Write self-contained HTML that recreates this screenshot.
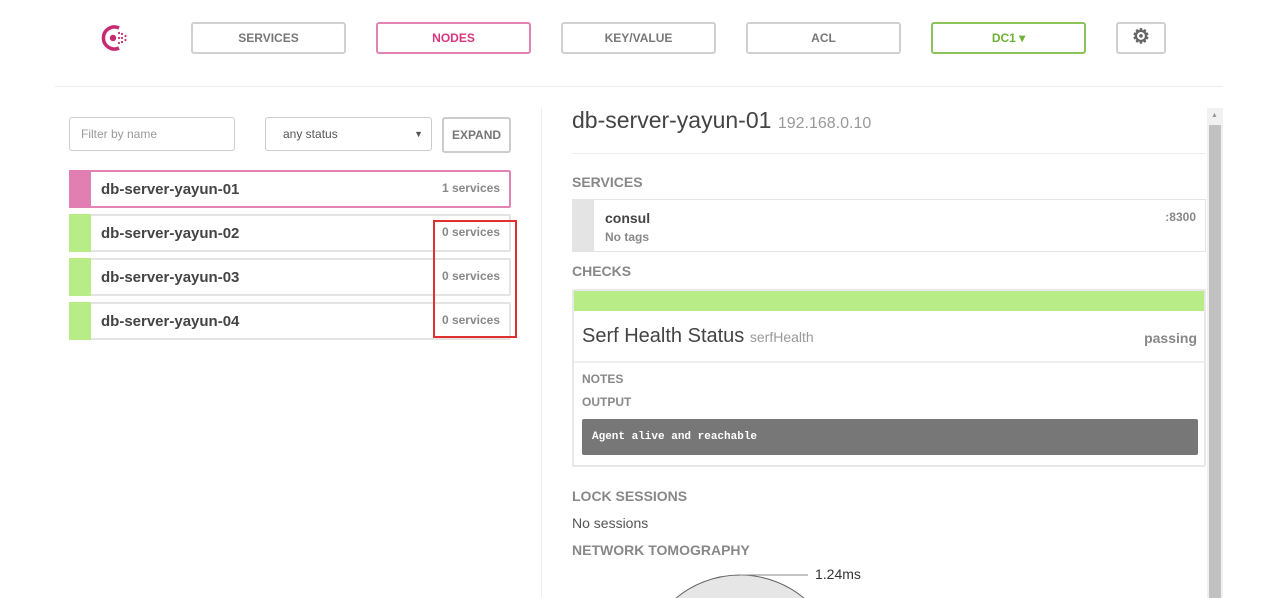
<!DOCTYPE html>
<html><head><style>
body{margin:0;width:1267px;height:598px;overflow:hidden;background:#fff;font-family:"Liberation Sans",sans-serif;position:relative}
.a{position:absolute}
.nb{position:absolute;top:22px;height:32px;width:155px;border:2px solid #d0d0d0;border-radius:3px;box-sizing:border-box;text-align:center;line-height:28px;font-size:12px;font-weight:bold;color:#777}
.row{position:absolute;left:69px;width:442px;height:38px;border:2px solid #e4e4e4;box-sizing:border-box;border-radius:2px}
.row .bar{position:absolute;left:-2px;top:-2px;bottom:-2px;width:22px;background:#b8ec86}
.row .n{position:absolute;left:30px;top:9px;font-size:15px;font-weight:bold;color:#444}
.row .s{position:absolute;right:9px;top:9px;font-size:12px;font-weight:bold;color:#888}
.h{position:absolute;left:572px;font-size:14px;font-weight:bold;color:#888}
</style></head><body>
<svg class="a" style="left:99px;top:23px" width="32" height="30" viewBox="0 0 32 30"><path d="M20 5A11 11 0 1 0 20 25" fill="none" stroke="#c62a71" stroke-width="3.5"/><circle cx="14" cy="15" r="3.2" fill="#c62a71"/><g fill="#c62a71"><circle cx="20" cy="15" r="1.1"/><circle cx="23" cy="11" r="1.1"/><circle cx="23" cy="15" r="1.1"/><circle cx="23" cy="19" r="1.1"/><circle cx="26.5" cy="13" r="1.1"/><circle cx="26.5" cy="17" r="1.1"/><circle cx="20" cy="10" r="1.1"/><circle cx="20" cy="20" r="1.1"/></g></svg>
<div class="nb" style="left:191px">SERVICES</div>
<div class="nb" style="left:376px;border-color:#e283b3;color:#d6377d">NODES</div>
<div class="nb" style="left:561px">KEY/VALUE</div>
<div class="nb" style="left:746px">ACL</div>
<div class="nb" style="left:931px;border-color:#8cc25a;color:#6fb136">DC1 ▾</div>
<div class="nb" style="left:1116px;width:50px;font-size:20px;line-height:27px;color:#666">⚙</div>
<div class="a" style="left:55px;top:86px;width:1168px;height:1px;background:#eee"></div>
<div class="a" style="left:69px;top:117px;width:166px;height:34px;border:1px solid #ccc;border-radius:3px;box-sizing:border-box;font-size:12px;color:#999;padding:9px 11px">Filter by name</div>
<div class="a" style="left:265px;top:117px;width:167px;height:34px;border:1px solid #ccc;border-radius:3px;box-sizing:border-box;font-size:12px;color:#555;padding:9px 17px">any status<span style="position:absolute;right:8px;font-size:9px;top:11px">▼</span></div>
<div class="a" style="left:442px;top:117px;width:69px;height:36px;border:2px solid #ccc;border-radius:3px;box-sizing:border-box;font-size:12px;font-weight:bold;color:#777;text-align:center;line-height:32px">EXPAND</div>
<div class="row" style="top:170px;border-color:#e283b3"><div class="bar" style="background:#e27fb2"></div><div class="n">db-server-yayun-01</div><div class="s">1 services</div></div>
<div class="row" style="top:214px"><div class="bar"></div><div class="n">db-server-yayun-02</div><div class="s">0 services</div></div>
<div class="row" style="top:258px"><div class="bar"></div><div class="n">db-server-yayun-03</div><div class="s">0 services</div></div>
<div class="row" style="top:302px"><div class="bar"></div><div class="n">db-server-yayun-04</div><div class="s">0 services</div></div>
<div class="a" style="left:433px;top:220px;width:80px;height:114px;border:2px solid #e03030"></div>
<div class="a" style="left:541px;top:108px;width:1px;height:490px;background:#eee"></div>
<div class="a" style="left:572px;top:107px;font-size:23px;color:#444">db-server-yayun-01 <span style="font-size:16px;color:#999">192.168.0.10</span></div>
<div class="a" style="left:572px;top:153px;width:634px;height:1px;background:#eee"></div>
<div class="h" style="top:174px">SERVICES</div>
<div class="a" style="left:572px;top:199px;width:634px;height:53px;border:1px solid #e4e4e4;box-sizing:border-box"><div class="a" style="left:0;top:0;bottom:0;width:21px;background:#e4e4e4"></div><div class="a" style="left:32px;top:10px;font-size:14px;font-weight:bold;color:#444">consul</div><div class="a" style="left:32px;top:30px;font-size:12px;font-weight:bold;color:#888">No tags</div><div class="a" style="right:9px;top:10px;font-size:12px;color:#888;font-weight:bold">:8300</div></div>
<div class="h" style="top:263px">CHECKS</div>
<div class="a" style="left:572px;top:289px;width:634px;height:178px;border:2px solid #e8e8e8;box-sizing:border-box;border-radius:2px">
<div class="a" style="left:0;top:0;right:0;height:20px;background:#b8ec86"></div>
<div class="a" style="left:8px;top:34px;font-size:20px;color:#444">Serf Health Status <span style="font-size:14px;color:#999">serfHealth</span></div>
<div class="a" style="right:7px;top:39px;font-size:14px;font-weight:bold;color:#888">passing</div>
<div class="a" style="left:0;right:0;top:70px;height:2px;background:#eee"></div>
<div class="a" style="left:8px;top:81px;font-size:12px;font-weight:bold;color:#888">NOTES</div>
<div class="a" style="left:8px;top:104px;font-size:12px;font-weight:bold;color:#888">OUTPUT</div>
<div class="a" style="left:8px;top:128px;width:616px;height:36px;background:#777;border-radius:2px;font-family:'Liberation Mono',monospace;font-size:11px;font-weight:bold;color:#fff;line-height:36px;padding-left:10px;box-sizing:border-box">Agent alive and reachable</div>
</div>
<div class="h" style="top:488px">LOCK SESSIONS</div>
<div class="a" style="left:572px;top:515px;font-size:14px;color:#555">No sessions</div>
<div class="h" style="top:542px">NETWORK TOMOGRAPHY</div>
<svg class="a" style="left:560px;top:560px" width="320" height="38"><circle cx="180" cy="115" r="100" fill="#e6e6e6" stroke="#666"/><line x1="180" y1="15" x2="248" y2="15" stroke="#888"/><text x="255" y="19" font-size="14" font-family="Liberation Sans" fill="#333">1.24ms</text></svg>
<div class="a" style="left:1207px;top:108px;width:16px;height:490px;background:#f1f1f1"><div class="a" style="left:2px;top:17px;width:12px;bottom:0;background:#c1c1c1"></div><div class="a" style="left:4px;top:4px;font-size:7px;color:#999">▲</div></div>
</body></html>
